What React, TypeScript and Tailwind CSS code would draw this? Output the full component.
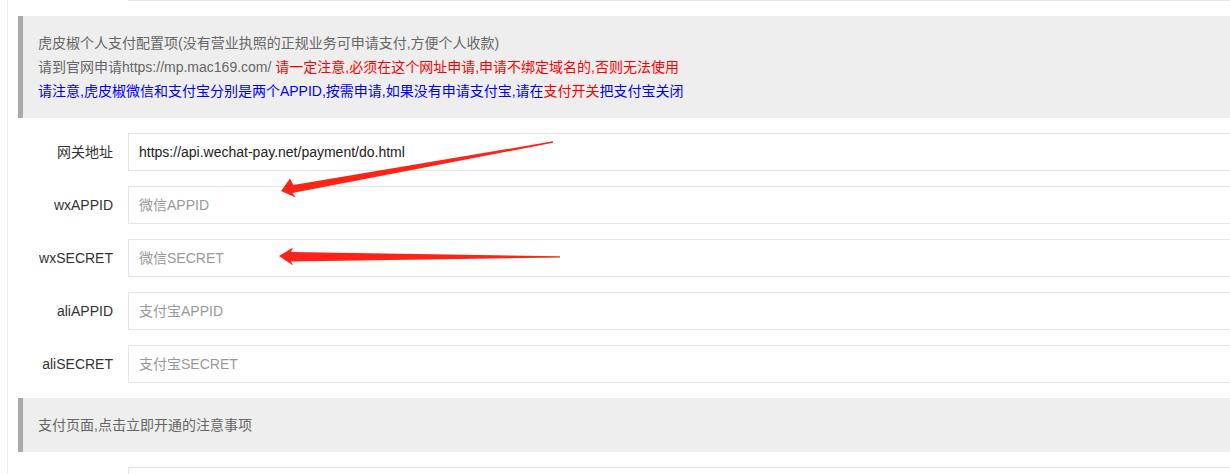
const fields = [
  { label: "网关地址", value: "https://api.wechat-pay.net/payment/do.html", placeholder: "" },
  { label: "wxAPPID", value: "", placeholder: "微信APPID" },
  { label: "wxSECRET", value: "", placeholder: "微信SECRET" },
  { label: "aliAPPID", value: "", placeholder: "支付宝APPID" },
  { label: "aliSECRET", value: "", placeholder: "支付宝SECRET" },
]

const FormItem = ({ label, value, placeholder, className = "" }: { label: string, value: string, placeholder: string, className?: string }) => {
  return (
    <div className={"flex mb-[15px] " + className}>
      <label className="w-[110px] shrink-0 pr-[15px] text-right text-sm leading-[38px] text-[#333]">{label}</label>
      <input
        className="flex-1 h-[38px] border border-[#e6e6e6] bg-white pl-[10px] text-sm text-[#222] outline-none placeholder:text-[#999]"
        defaultValue={value}
        placeholder={placeholder}
      />
    </div>
  )
}

const Quote = ({ children }: { children: React.ReactNode }) => {
  return (
    <div className="mb-[15px] border-l-[5px] border-[#aaaaaa] bg-[#eeeeee] px-[15px] py-[15px] text-sm leading-6 text-[#666]">
      {children}
    </div>
  )
}

export default function App() {
  return (
    <div
      className="relative h-[474px] w-[1230px] overflow-hidden bg-white"
      style={{ fontFamily: '"Liberation Sans", "Noto Sans CJK SC", sans-serif' }}
    >
      <div className="ml-[7px] flex h-full flex-col border-l border-[#eeeeee] pl-[10px]">
        <div className="w-[1260px]">
          <FormItem label="" value="" placeholder="" className="mt-[-37px]" />

          <Quote>
            <p>虎皮椒个人支付配置项(没有营业执照的正规业务可申请支付,方便个人收款)</p>
            <p>
              请到官网申请https://mp.mac169.com/ <span className="text-[#ff0000]">请一定注意,必须在这个网址申请,申请不绑定域名的,否则无法使用</span>
            </p>
            <p className="text-[#0000ff]">
              请注意,虎皮椒微信和支付宝分别是两个APPID,按需申请,如果没有申请支付宝,请在<span className="text-[#ff0000]">支付开关</span>把支付宝关闭
            </p>
          </Quote>

          {fields.map((f, i) => (
            <FormItem key={i} label={f.label} value={f.value} placeholder={f.placeholder} />
          ))}

          <Quote>
            <p>支付页面,点击立即开通的注意事项</p>
          </Quote>

          <FormItem label="" value="" placeholder="" />
        </div>
      </div>

      {/* red arrows drawn over the form */}
      <svg className="pointer-events-none absolute left-0 top-0" width="1230" height="474">
        <polygon
          fill="#ff2216"
          points="281,191 290,178.5 293.4,185 553,141.3 553,142.8 292.4,193 296,197.5"
        />
        <polygon
          fill="#ff2216"
          points="279,256 293,247.5 291,252 560,256.3 560,257.6 291,261.5 293,265.5"
        />
      </svg>
    </div>
  )
}
